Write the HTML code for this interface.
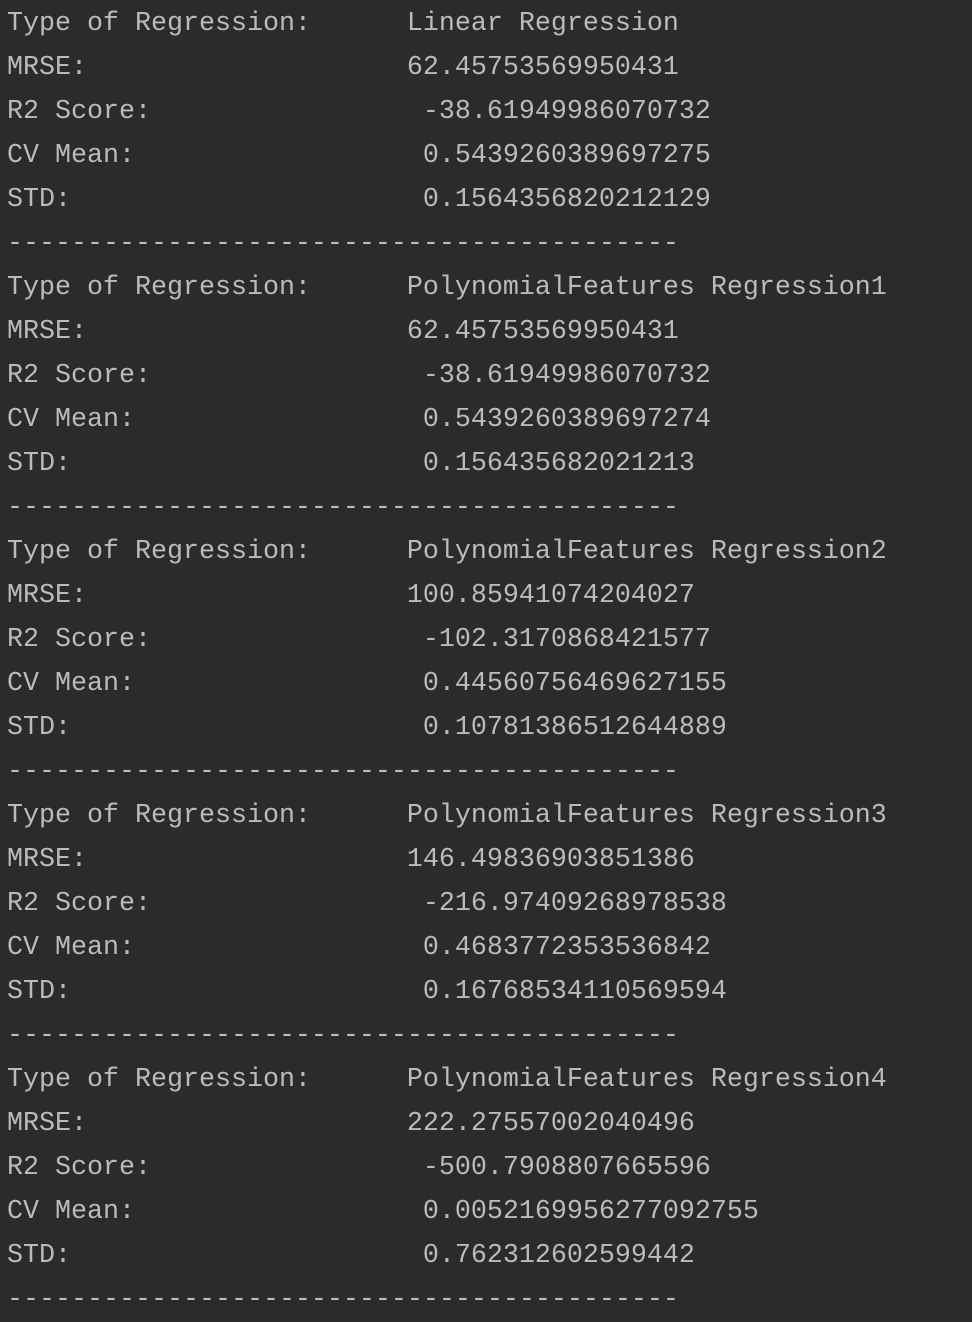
<!DOCTYPE html>
<html><head><meta charset="utf-8"><style>
html,body{margin:0;padding:0;background:#2b2b2b;width:972px;height:1308px;overflow:hidden}
pre{margin:0;position:absolute;left:7px;top:2px;font-family:"Liberation Mono","DejaVu Sans Mono",monospace;font-size:26.67px;line-height:44px;color:#bbbbbb;white-space:pre}
</style></head><body><pre>Type of Regression:      Linear Regression
MRSE:                    62.45753569950431
R2 Score:                 -38.61949986070732
CV Mean:                  0.5439260389697275
STD:                      0.1564356820212129
------------------------------------------
Type of Regression:      PolynomialFeatures Regression1
MRSE:                    62.45753569950431
R2 Score:                 -38.61949986070732
CV Mean:                  0.5439260389697274
STD:                      0.156435682021213
------------------------------------------
Type of Regression:      PolynomialFeatures Regression2
MRSE:                    100.85941074204027
R2 Score:                 -102.3170868421577
CV Mean:                  0.44560756469627155
STD:                      0.10781386512644889
------------------------------------------
Type of Regression:      PolynomialFeatures Regression3
MRSE:                    146.49836903851386
R2 Score:                 -216.97409268978538
CV Mean:                  0.4683772353536842
STD:                      0.16768534110569594
------------------------------------------
Type of Regression:      PolynomialFeatures Regression4
MRSE:                    222.27557002040496
R2 Score:                 -500.7908807665596
CV Mean:                  0.0052169956277092755
STD:                      0.762312602599442
------------------------------------------</pre></body></html>
